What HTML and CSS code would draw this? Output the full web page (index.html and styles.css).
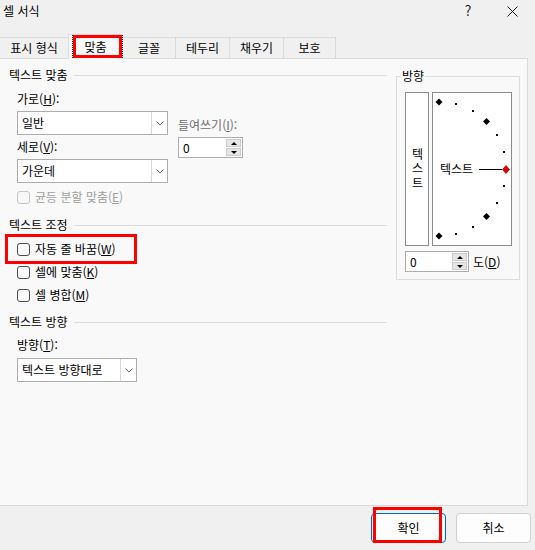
FILE: index.html
```html
<!DOCTYPE html>
<html lang="ko">
<head>
<meta charset="utf-8">
<title>셀 서식</title>
<link rel="stylesheet" href="styles.css">
</head>
<body>
<div class="dialog">
  <div class="titlebar">
    <span class="title">셀 서식</span>
    <span class="help">?</span>
    <span class="close"><svg width="11" height="11" viewBox="0 0 11 11"><path d="M0.5 0.5L10.5 10.5M10.5 0.5L0.5 10.5" stroke="#1a1a1a" stroke-width="1" fill="none"/></svg></span>
  </div>

  <div class="tabs">
    <div class="tab tab-format">표시 형식</div>
    <div class="tab tab-align"><span class="focus"></span>맞춤</div>
    <div class="tab tab-font">글꼴</div>
    <div class="tab tab-border">테두리</div>
    <div class="tab tab-fill">채우기</div>
    <div class="tab tab-protect">보호</div>
  </div>

  <div class="panel">
    <div class="left">
      <div class="section-head head-1"><span>텍스트 맞춤</span><i class="rule"></i></div>
      <div class="sub">
        <div class="align-block">
          <div class="col-main">
            <div class="label label-h">가로(<u>H</u>):</div>
            <div class="select select-wide"><span class="value">일반</span><span class="drop"><svg width="8" height="5" viewBox="0 0 8 5"><path d="M0.5 0.5L4 4L7.5 0.5" stroke="#6a6a6a" fill="none"/></svg></span></div>
            <div class="label label-v">세로(<u>V</u>):</div>
            <div class="select select-wide select-v"><span class="value">가운데</span><span class="drop"><svg width="8" height="5" viewBox="0 0 8 5"><path d="M0.5 0.5L4 4L7.5 0.5" stroke="#6a6a6a" fill="none"/></svg></span></div>
          </div>
          <div class="col-indent">
            <div class="label muted">들여쓰기(<u>I</u>):</div>
            <div class="spin spin-indent"><span class="value">0</span><span class="arrows"><span class="up"></span><span class="down"></span></span></div>
          </div>
        </div>
        <div class="check disabled check-dist"><span class="box"></span><span>균등 분할 맞춤(<u>E</u>)</span></div>
      </div>

      <div class="section-head head-2"><span>텍스트 조정</span><i class="rule"></i></div>
      <div class="sub">
        <div class="check check-wrap"><span class="box"></span><span>자동 줄 바꿈(<u>W</u>)</span></div>
        <div class="check check-next"><span class="box"></span><span>셀에 맞춤(<u>K</u>)</span></div>
        <div class="check check-next"><span class="box"></span><span>셀 병합(<u>M</u>)</span></div>
      </div>

      <div class="section-head head-3"><span>텍스트 방향</span><i class="rule"></i></div>
      <div class="sub">
        <div class="label label-dir">방향(<u>T</u>):</div>
        <div class="select select-dir"><span class="value">텍스트 방향대로</span><span class="drop"><svg width="8" height="5" viewBox="0 0 8 5"><path d="M0.5 0.5L4 4L7.5 0.5" stroke="#6a6a6a" fill="none"/></svg></span></div>
      </div>
    </div>

    <fieldset class="orient">
      <legend>방향</legend>
      <div class="orient-boxes">
        <div class="vbox"><span class="vtext">텍스트</span></div>
        <div class="arc">
          <svg width="78" height="152" viewBox="0 0 78 152">
            <g fill="#000">
              <polygon points="6,5.5 9.5,9 6,12.5 2.5,9"/>
              <polygon points="53.5,25 57,28.5 53.5,32 50,28.5"/>
              <polygon points="53.5,120 57,123.5 53.5,127 50,123.5"/>
              <polygon points="6,139.5 9.5,143 6,146.5 2.5,143"/>
              <rect x="22" y="10" width="2" height="2"/>
              <rect x="39" y="17" width="2" height="2"/>
              <rect x="63" y="41" width="2" height="2"/>
              <rect x="70" y="58" width="2" height="2"/>
              <rect x="70" y="92" width="2" height="2"/>
              <rect x="63" y="109" width="2" height="2"/>
              <rect x="39" y="133" width="2" height="2"/>
              <rect x="22" y="140" width="2" height="2"/>
            </g>
            <line x1="46" y1="76.5" x2="69" y2="76.5" stroke="#000" stroke-width="1"/>
            <polygon points="73,72.5 76.5,76.5 73,80.5 69.5,76.5" fill="#e00000" stroke="#5a0000" stroke-width="0.6"/>
            <text x="7" y="81" class="arc-text">텍스트</text>
          </svg>
        </div>
      </div>
      <div class="deg-row">
        <div class="spin spin-deg"><span class="value">0</span><span class="arrows"><span class="up"></span><span class="down"></span></span></div>
        <span class="deg-label">도(<u>D</u>)</span>
      </div>
    </fieldset>
  </div>

  <div class="footer">
    <button class="btn btn-default">확인</button>
    <button class="btn">취소</button>
  </div>
</div>
</body>
</html>
```

FILE: styles.css
```css
*, *::before, *::after { box-sizing: border-box; }
html, body { margin: 0; padding: 0; }
body {
  width: 535px;
  height: 550px;
  overflow: hidden;
  background: #f0f0f0;
  font-family: "Noto Sans CJK KR", "Noto Sans", sans-serif;
  font-size: 12px;
  color: #000;
}
u { text-decoration: underline; text-underline-offset: 1px; }

.dialog { display: flex; flex-direction: column; width: 535px; height: 550px; }

/* title bar */
.titlebar { height: 34px; display: flex; align-items: flex-start; padding-top: 2px; }
.title { margin-left: 3px; line-height: 17px; }
.help { margin-left: auto; width: 12px; text-align: center; font-size: 14px; line-height: 17px; margin-right: 33px; color: #1a1a1a; }
.close { width: 11px; height: 11px; margin-top: 4px; margin-right: 17px; display: flex; }

/* tabs */
.tabs { display: flex; align-items: flex-end; height: 25px; margin-bottom: -1px; position: relative; z-index: 1; }
.tab {
  height: 21px;
  margin-bottom: 1px;
  border-top: 1px solid #dadada;
  border-right: 1px solid #dadada;
  background: #f0f0f0;
  display: flex;
  align-items: center;
  justify-content: center;
  line-height: 16px;
}
.tab-format { width: 68px; border-right: none; }
.tab-align {
  width: 55px;
  height: 25px;
  margin-bottom: 0;
  background: #f9f9f9;
  border: 1px solid #dadada;
  border-bottom: none;
  position: relative;
  padding-bottom: 1px;
}
.tab-align .focus { position: absolute; left: 3px; top: 0; width: 51px; height: 23px; border: 1px dotted #222; }
.tab-align::after { content: ""; position: absolute; left: 4px; top: 0; width: 49px; height: 23px; border: 3px solid #ff0000; }
.tab-font { width: 53px; }
.tab-border { width: 54px; }
.tab-fill { width: 54px; }
.tab-protect { width: 52px; }

/* panel */
.panel {
  height: 448px;
  width: 528px;
  background: #f9f9f9;
  border: 1px solid #dadada;
  border-left: none;
  display: flex;
  align-items: flex-start;
  padding-left: 9px;
}
.left { width: 378px; display: flex; flex-direction: column; }

.section-head { display: flex; align-items: center; gap: 6px; height: 14px; line-height: 14px; }
.section-head .rule { flex: 1; height: 1px; background: #dcdcdc; }
.head-1 { margin-top: 9px; }
.head-2 { margin-top: 13px; }
.head-3 { margin-top: 12px; }

.sub { padding-left: 8px; display: flex; flex-direction: column; align-items: flex-start; }
.label { height: 16px; line-height: 16px; }
.label-h { margin-top: 9px; }
.label-v { margin-top: 4px; }
.label-dir { margin-top: 8px; }
.muted { color: #6d6d6d; }

.align-block { display: flex; align-items: flex-start; }
.col-main { display: flex; flex-direction: column; }
.col-indent { display: flex; flex-direction: column; margin-left: 10px; padding-top: 35px; }
.col-indent .spin { margin-top: 4px; }

.select { display: flex; height: 24px; border: 1px solid #adadad; background: #fff; margin-top: 4px; }
.select .value { flex: 1; padding-left: 4px; line-height: 22px; white-space: nowrap; }
.select .drop { width: 16px; border-left: 1px solid #d6d6d6; display: flex; align-items: center; justify-content: center; }
.select-wide { width: 151px; }
.select-dir { width: 120px; margin-top: 5px; }

.spin { display: flex; height: 21px; border: 1px solid #adadad; background: #fff; }
.spin .value { flex: 1; padding-left: 4px; line-height: 19px; }
.spin .arrows { width: 17px; display: flex; flex-direction: column; padding: 1px; gap: 1px; }
.spin .arrows span { flex: 1; background: #e6e6e6; border: 1px solid #cccccc; display: flex; align-items: center; justify-content: center; }
.spin .up::before { content: ""; border-left: 3px solid transparent; border-right: 3px solid transparent; border-bottom: 3px solid #000; }
.spin .down::before { content: ""; border-left: 3px solid transparent; border-right: 3px solid transparent; border-top: 3px solid #000; }
.spin-indent { width: 65px; }
.spin-deg { width: 64px; }

.check { display: flex; align-items: center; gap: 5px; height: 16px; line-height: 16px; white-space: nowrap; }
.check .box { width: 13px; height: 13px; border: 1px solid #4d4d4d; border-radius: 3px; background: #fbfbfb; flex: none; }
.check.disabled { color: #a0a0a0; }
.check.disabled .box { border-color: #c6c6c6; background: #f7f7f7; }
.check-dist { margin-top: 6px; }
.check-wrap { margin-top: 9px; position: relative; }
.check-wrap::after { content: ""; position: absolute; left: -12px; top: -7px; width: 132px; height: 30px; border: 3px solid #ff0000; }
.check-next { margin-top: 7px; }

/* orientation group */
.orient {
  margin: 10px 0 0 9px;
  padding: 9px 7px 7px 8px;
  width: 124px;
  min-width: 0;
  border: 1px solid #dcdcdc;
}
.orient legend { padding: 0 1px; margin-left: -4px; line-height: 14px; height: 14px; }
.orient-boxes { display: flex; gap: 3px; height: 154px; }
.vbox {
  width: 24px;
  height: 154px;
  border: 1px solid #8c8c8c;
  background: #fff;
  display: flex;
  align-items: center;
  justify-content: center;
}
.vtext {
  writing-mode: vertical-rl;
  text-orientation: upright;
  letter-spacing: 2.5px;
  line-height: 14px;
  margin-top: 2px;
}
.arc { width: 80px; height: 154px; border: 1px solid #8c8c8c; background: #fff; }
.arc svg { display: block; }
.arc-text { font-family: "Noto Sans CJK KR", "Noto Sans", sans-serif; font-size: 12px; fill: #000; }
.deg-row { display: flex; align-items: center; margin-top: 5px; }
.deg-label { margin-left: 4px; line-height: 16px; }

/* footer */
.footer { flex: 1; display: flex; justify-content: flex-end; align-items: flex-start; gap: 10px; padding-top: 7px; padding-right: 4px; }
.btn {
  width: 75px;
  height: 30px;
  border: 1px solid #d0d0d0;
  border-radius: 4px;
  background: #fdfdfd;
  font-family: "Noto Sans CJK KR", "Noto Sans", sans-serif;
  font-size: 12px;
  color: #000;
  padding: 0;
  line-height: 28px;
}
.btn-default { border-color: #0067c0; position: relative; }
.btn-default::after { content: ""; position: absolute; left: 1px; top: -7px; width: 69px; height: 36px; border: 3px solid #ff0000; }
```
